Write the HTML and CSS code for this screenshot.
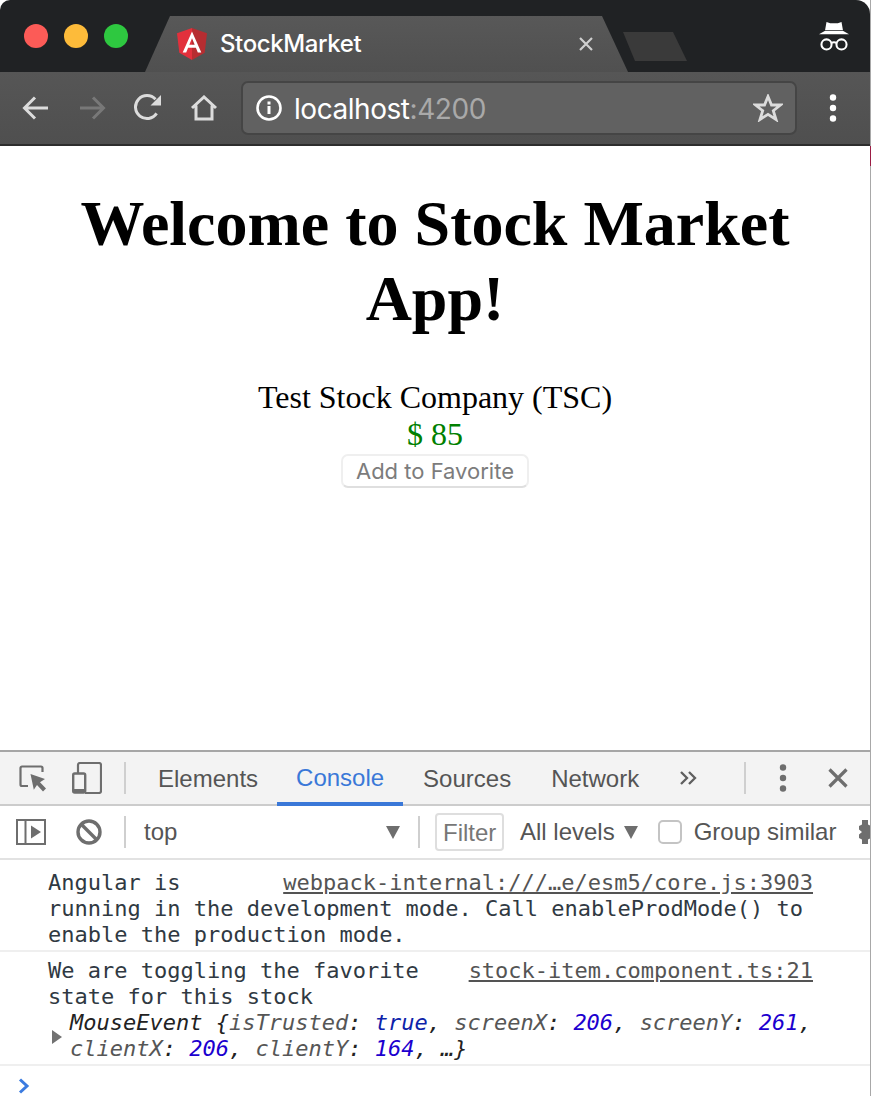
FILE: index.html
```html
<!DOCTYPE html>
<html lang="en">
<head>
<meta charset="utf-8">
<title>StockMarket</title>
<link rel="stylesheet" href="styles.css">
</head>
<body>
<div class="window">
  <header class="tabstrip">
    <div class="lights">
      <span class="light red"></span>
      <span class="light yellow"></span>
      <span class="light green"></span>
    </div>
    <div class="tab">
      <svg class="favicon" width="30" height="32" viewBox="0 0 30 32">
        <path fill="#e2303c" d="M15 0 0 5.200 2.300 24.800 15 32Z"/>
        <path fill="#b62d31" d="M15 0 30 5.200 27.700 24.800 15 32Z"/>
        <path fill="#fff" d="M15 3.600 5.700 24.400h3.500l1.900-4.700h7.800l1.900 4.700h3.500ZM12.300 16.800 15 10.300l2.700 6.500Z"/>
      </svg>
      <span class="tab-title">StockMarket</span>
      <svg class="tab-close" width="16" height="16" viewBox="0 0 16 16"><path d="M2 2 14 14M14 2 2 14" stroke="#cfcfcf" stroke-width="2.200" fill="none"/></svg>
    </div>
    <div class="newtab"></div>
    <svg class="incognito" width="32" height="30" viewBox="0 0 34 32">
      <path fill="#fff" d="M9 1 13 2.500H21L25 1 26.500 9.500H7.500Z"/>
      <path fill="#fff" d="M1 14 7.500 10.500H26.500L33 14Z"/>
      <g fill="none" stroke="#fff" stroke-width="2.200">
        <circle cx="9" cy="25" r="5.400"/>
        <circle cx="25" cy="25" r="5.400"/>
        <path d="M14 23.500q3-1.500 6 0"/>
      </g>
    </svg>
  </header>

  <nav class="toolbar">
    <button class="tool-btn" type="button" aria-label="Back">
      <svg width="28" height="26" viewBox="0 0 28 26"><path d="M26 13H3M13 2.500 2.500 13 13 23.500" fill="none" stroke="#dcdcdc" stroke-width="3"/></svg>
    </button>
    <button class="tool-btn" type="button" aria-label="Forward">
      <svg width="28" height="26" viewBox="0 0 28 26"><path d="M2 13H25M15 2.500 25.500 13 15 23.500" fill="none" stroke="#787878" stroke-width="3"/></svg>
    </button>
    <button class="tool-btn" type="button" aria-label="Reload">
      <svg width="28" height="28" viewBox="0 0 28 28"><path d="M22.600 19.400A11.500 11.500 0 1 1 21.500 5.300" fill="none" stroke="#dcdcdc" stroke-width="3"/><path d="M27 1V11.500H16.500Z" fill="#dcdcdc"/></svg>
    </button>
    <button class="tool-btn" type="button" aria-label="Home">
      <svg width="28" height="26" viewBox="0 0 28 26"><path d="M2 13 14 2 26 13M6 10.500V24H22V10.500" fill="none" stroke="#dcdcdc" stroke-width="3"/></svg>
    </button>
    <div class="omnibox">
      <svg class="info" width="26" height="26" viewBox="0 0 26 26"><circle cx="13" cy="13" r="11.500" fill="none" stroke="#fff" stroke-width="2.600"/><rect x="11.500" y="11" width="3" height="8" fill="#fff"/><rect x="11.500" y="6.500" width="3" height="3" fill="#fff"/></svg>
      <span class="url">localhost<span class="url-port">:4200</span></span>
      <svg class="star" width="30" height="28" viewBox="0 0 30 28"><path d="M15 2.500 18.500 11H27.500L20.300 16.700 23 25.500 15 20.300 7 25.500 9.700 16.700 2.500 11H11.500Z" fill="none" stroke="#dcdcdc" stroke-width="2.800"/></svg>
    </div>
    <svg class="menu" width="8" height="28" viewBox="0 0 8 28"><circle cx="4" cy="3.500" r="3.200" fill="#fff"/><circle cx="4" cy="14" r="3.200" fill="#fff"/><circle cx="4" cy="24.500" r="3.200" fill="#fff"/></svg>
  </nav>

  <main class="page">
    <h1 class="heading">Welcome to Stock Market App!</h1>
    <div class="stock-name">Test Stock Company (TSC)</div>
    <div class="stock-price">$ 85</div>
    <button class="fav-btn" type="button">Add to Favorite</button>
  </main>

  <section class="devtools">
    <div class="dt-tabs">
      <svg class="dt-inspect" width="28" height="28" viewBox="0 0 28 28">
        <path d="M9 21H3a1.500 1.500 0 0 1-1.500-1.500V3A1.500 1.500 0 0 1 3 1.500H22A1.500 1.500 0 0 1 23.500 3V7" fill="none" stroke="#6e6e6e" stroke-width="2.200"/>
        <path d="M11.500 9 26 14 21 17.200 27 23.500 24 26.500 18 20 14.800 24.800Z" fill="#6e6e6e"/>
      </svg>
      <svg class="dt-device" width="30" height="32" viewBox="0 0 30 32">
        <path d="M6 11V3a2 2 0 0 1 2-2H27a2 2 0 0 1 2 2V29a2 2 0 0 1-2 2H13" fill="none" stroke="#6e6e6e" stroke-width="2.200"/>
        <rect x="1.200" y="11.500" width="12" height="19" rx="1.500" fill="none" stroke="#6e6e6e" stroke-width="2.400"/>
        <rect x="1" y="27" width="12" height="4" fill="#6e6e6e"/>
      </svg>
      <span class="dt-sep dt-sep-first"></span>
      <span class="dt-tab">Elements</span>
      <span class="dt-tab dt-tab-active">Console</span>
      <span class="dt-tab dt-tab-sources">Sources</span>
      <span class="dt-tab dt-tab-network">Network</span>
      <svg class="dt-more" width="19" height="16" viewBox="0 0 19 16"><path d="M2 2 8 8 2 14M10 2 16 8 10 14" fill="none" stroke="#5f5f5f" stroke-width="2.300"/></svg>
      <span class="dt-sep dt-sep-right"></span>
      <svg class="dt-dots" width="8" height="28" viewBox="0 0 8 28"><circle cx="4" cy="3.500" r="3.200" fill="#6e6e6e"/><circle cx="4" cy="14" r="3.200" fill="#6e6e6e"/><circle cx="4" cy="24.500" r="3.200" fill="#6e6e6e"/></svg>
      <svg class="dt-close" width="20" height="20" viewBox="0 0 20 20"><path d="M1.500 1.500 18.500 18.500M18.500 1.500 1.500 18.500" stroke="#6e6e6e" stroke-width="3.200" fill="none"/></svg>
    </div>
    <div class="dt-bar">
      <svg class="dt-sidebar" width="30" height="26" viewBox="0 0 30 26"><path d="M1 1H29V25H1ZM9.500 1V25" fill="none" stroke="#6e6e6e" stroke-width="2"/><path d="M15 6.500 25 13 15 19.500Z" fill="#6e6e6e"/></svg>
      <svg class="dt-clear" width="26" height="26" viewBox="0 0 26 26"><circle cx="13" cy="13" r="11" fill="none" stroke="#6e6e6e" stroke-width="3.400"/><path d="M5 5 21 21" stroke="#6e6e6e" stroke-width="3.400"/></svg>
      <span class="dt-sep dt-sep-bar"></span>
      <div class="dt-context">
        <span>top</span>
        <span class="dt-arrow"></span>
      </div>
      <span class="dt-sep"></span>
      <span class="dt-filter">Filter</span>
      <span class="dt-levels">All levels</span>
      <span class="dt-arrow dt-arrow-levels"></span>
      <span class="dt-check"></span>
      <span class="dt-group">Group similar</span>
      <svg class="dt-gear" width="12" height="24" viewBox="0 0 12 24"><path d="M3 0H9V4.500L12 6V18L9 19.500V24H3V19.500L0 18V14.500L3 12 0 9.500V6L3 4.500Z" fill="#6e6e6e"/></svg>
    </div>
    <div class="console">
      <div class="msg">
        <a class="msg-link">webpack-internal:///…e/esm5/core.js:3903</a>
        Angular is running in the development mode. Call enableProdMode() to enable the production mode.
      </div>
      <div class="msg msg-second">
        <a class="msg-link">stock-item.component.ts:21</a>
        We are toggling the favorite state for this stock
        <div class="obj">
          <span class="obj-caret"></span>
          <span class="obj-name">MouseEvent {</span><span class="obj-key">isTrusted</span><span class="obj-name">: </span><span class="obj-bool">true</span><span class="obj-name">, </span><span class="obj-key">screenX</span><span class="obj-name">: </span><span class="obj-num">206</span><span class="obj-name">, </span><span class="obj-key">screenY</span><span class="obj-name">: </span><span class="obj-num">261</span><span class="obj-name">, </span><span class="obj-key">clientX</span><span class="obj-name">: </span><span class="obj-num">206</span><span class="obj-name">, </span><span class="obj-key">clientY</span><span class="obj-name">: </span><span class="obj-num">164</span><span class="obj-name">, …}</span>
        </div>
      </div>
      <div class="prompt">
        <svg width="12" height="16" viewBox="0 0 12 16"><path d="M2 1.500 9 8 2 14.500" fill="none" stroke="#3b7be0" stroke-width="3"/></svg>
      </div>
    </div>
  </section>
</div>
<div class="edge"><div class="edge-mark"></div></div>
</body>
</html>
```

FILE: styles.css
```css
* { box-sizing: border-box; }

html, body {
  margin: 0;
  height: 100%;
  overflow: hidden;
  background: #fff;
}

body {
  display: flex;
  height: 1096px;
}

svg { display: block; flex: none; }

.window {
  width: 870px;
  height: 1096px;
  flex: none;
  display: flex;
  flex-direction: column;
  overflow: hidden;
  border-radius: 10px 14px 0 0;
  background: #fff;
}

.edge {
  width: 1px;
  flex: none;
  background: #a8a8a8;
  padding-top: 146px;
}

.edge-mark {
  height: 20px;
  background: #9b1c44;
}

/* Tab strip */
.tabstrip {
  height: 72px;
  flex: none;
  display: flex;
  align-items: flex-end;
  background: #202224;
}

.lights {
  width: 145px;
  flex: none;
  align-self: flex-start;
  display: flex;
  gap: 16px;
  padding: 24px 0 0 24px;
}

.light {
  width: 24px;
  height: 24px;
  border-radius: 50%;
}

.red { background: #fc5b57; }
.yellow { background: #fdbb3a; }
.green { background: #2ec840; }

.tab {
  width: 483px;
  height: 56px;
  flex: none;
  display: flex;
  align-items: center;
  padding: 0 34px 0 32px;
  clip-path: polygon(0 100%, 25px 0, 457px 0, 483px 100%);
  background: linear-gradient(#585858, #505050);
}

.favicon { margin-top: -1px; }

.tab-title {
  margin-left: 13px;
  flex: 1;
  font: 500 24px/32px Inter, "Noto Sans", sans-serif;
  color: #fff;
  letter-spacing: -0.38px;
}

.newtab {
  width: 64px;
  height: 29px;
  flex: none;
  align-self: flex-start;
  margin: 32px 0 0 -5px;
  clip-path: polygon(0 0, 50px 0, 64px 100%, 12px 100%);
  background: #3a3a3a;
}

.incognito {
  align-self: flex-start;
  margin: 21px 20px 0 auto;
}

/* Toolbar */
.toolbar {
  height: 74px;
  flex: none;
  display: flex;
  align-items: center;
  padding: 0 0 1px 8px;
  background: linear-gradient(#565656, #4f4f4f);
  border-bottom: 2px solid #2d2d2d;
}

.tool-btn {
  width: 56px;
  height: 54px;
  flex: none;
  display: flex;
  align-items: center;
  justify-content: center;
  padding: 0;
  border: 0;
  background: transparent;
}

.omnibox {
  width: 556px;
  height: 54px;
  flex: none;
  margin-left: 9px;
  display: flex;
  align-items: center;
  padding: 0 12px 0 13px;
  border: 2px solid #454545;
  border-radius: 7px;
  background: #616161;
}

.url {
  flex: 1;
  margin: 2px 0 0 12px;
  font: 400 28px/34px Inter, "Noto Sans", sans-serif;
  color: #fff;
  letter-spacing: -0.45px;
}

.url-port { color: #a9a9a9; }

.menu { margin-left: 32px; }

/* Page */
.page {
  flex: 1;
  min-height: 0;
  font: 32px "Liberation Serif", serif;
  color: #000;
  text-align: center;
}

.heading {
  margin: 41px 60px 43px;
  font-size: 64px;
  font-weight: 700;
  line-height: 74.5px;
}

.stock-name { line-height: 37px; }

.stock-price {
  line-height: 37px;
  color: #008000;
}

.fav-btn {
  display: block;
  width: 188px;
  height: 34px;
  margin: 1px auto 0;
  padding: 0;
  border: 2px solid #efefef;
  border-bottom-color: #dfdfdf;
  border-radius: 7px;
  background: #fff;
  font: 400 22px/28px Inter, Roboto, sans-serif;
  color: #7c7c7c;
}

/* DevTools */
.devtools {
  height: 346px;
  flex: none;
  display: flex;
  flex-direction: column;
  border-top: 2px solid #a6a6a6;
  font-family: "Liberation Sans", Arial, sans-serif;
  color: #555;
}

.dt-tabs {
  height: 54px;
  flex: none;
  display: flex;
  align-items: center;
  padding-left: 19px;
  background: #f3f3f3;
  border-bottom: 2px solid #cccccc;
  font-size: 24px;
}

.dt-inspect { margin-top: 2px; }
.dt-device { margin-left: 25px; }

.dt-sep {
  width: 2px;
  height: 32px;
  flex: none;
  background: #cfcfcf;
}

.dt-sep-first { margin: 0 13px 0 22px; }

.dt-tab {
  height: 52px;
  display: flex;
  align-items: center;
  padding: 2px 19px 0;
  flex: none;
  white-space: nowrap;
}

.dt-tab-active {
  color: #3a78d8;
  margin-top: 2px;
  border-bottom: 4px solid #3a78d8;
  height: 54px;
}

.dt-tab-sources { margin-left: 1px; }
.dt-tab-network { margin-left: 2px; }
.dt-more { margin-left: 21px; }
.dt-sep-right { margin-left: 46px; }
.dt-dots { margin-left: 33px; }
.dt-close { margin-left: 41px; }

.dt-bar {
  height: 54px;
  flex: none;
  display: flex;
  align-items: center;
  background: #fff;
  border-bottom: 2px solid #e2e2e2;
  font-size: 24px;
  white-space: nowrap;
}

.dt-sidebar { margin-left: 16px; }
.dt-clear { margin-left: 30px; }
.dt-sep-bar { margin-left: 22px; }

.dt-context {
  width: 292px;
  flex: none;
  display: flex;
  align-items: center;
  justify-content: space-between;
  padding: 0 18px;
}

.dt-arrow {
  width: 0;
  height: 0;
  flex: none;
  border: 7px solid transparent;
  border-top: 13px solid #6e6e6e;
  border-bottom: 0;
}

.dt-filter {
  width: 69px;
  height: 38px;
  flex: none;
  margin-left: 15px;
  padding-left: 6px;
  border: 2px solid #dedede;
  border-radius: 4px;
  line-height: 36px;
  color: #777;
}

.dt-levels { margin-left: 16px; }
.dt-arrow-levels { margin-left: 9px; }

.dt-check {
  width: 24px;
  height: 24px;
  flex: none;
  margin-left: 20px;
  border: 2px solid #c4c4c4;
  border-radius: 5px;
}

.dt-group { margin-left: 12px; }
.dt-gear { margin-left: 23px; }

.console {
  flex: 1;
  min-height: 0;
  display: flex;
  flex-direction: column;
  background: #fff;
  font: 22px/26px "DejaVu Sans Mono", monospace;
  color: #303942;
}

.msg {
  padding: 10px 57px 2px 48px;
  border-bottom: 2px solid #efefef;
}

.msg-second { padding-top: 6px; }

.msg-link {
  float: right;
  margin-left: 26px;
  color: #545454;
  text-decoration: underline;
}

.obj {
  position: relative;
  clear: both;
  margin-right: -10px;
  padding-left: 22px;
  font-style: italic;
}

.obj-caret {
  position: absolute;
  left: 4px;
  top: 20px;
  width: 0;
  height: 0;
  border: 7px solid transparent;
  border-left: 10px solid #727272;
  border-right: 0;
}

.obj-name { color: #222; }
.obj-key { color: #565656; }
.obj-num { color: #1c00cf; }
.obj-bool { color: #0d22aa; }

.prompt {
  padding: 12px 0 0 18px;
}
```
